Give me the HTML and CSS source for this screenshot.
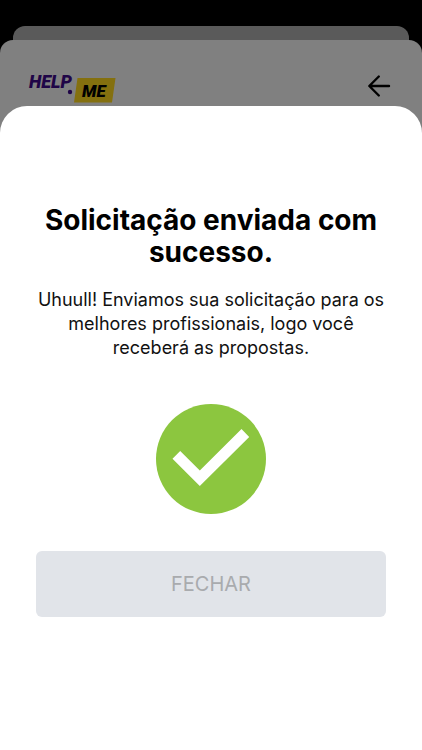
FILE: index.html
```html
<!DOCTYPE html>
<html lang="pt-BR">
<head>
    <meta charset="UTF-8">
    <meta name="viewport" content="width=device-width, initial-scale=1.0">
    <title>Help.Me</title>
    <link rel="stylesheet" href="styles.css">
</head>
<body>

    <div class="card-behind"></div>

    <div class="card">
        <header class="header">
            <svg class="logo" viewBox="0 0 88 34" role="img" aria-label="Help.Me">
                <text class="logo-help" x="1" y="18">HELP</text>
                <circle class="logo-dot" cx="42" cy="22" r="2.2" />
                <polygon class="logo-tag" points="49.5,8 87.5,8 84,32.5 46,32.5" />
                <text class="logo-me" x="54" y="27">ME</text>
            </svg>
            <button class="back" type="button" aria-label="Voltar">
                <svg viewBox="0 0 24 24">
                    <path d="M22 12H2.500M11.800 2.500L2.300 12L11.800 21.500" />
                </svg>
            </button>
        </header>

        <main class="sheet">
            <h1>Solicitação enviada com sucesso.</h1>
            <p>Uhuull! Enviamos sua solicitação para os melhores profissionais, logo você receberá as propostas.</p>
            <svg class="check" viewBox="0 0 110 110">
                <circle cx="55" cy="55" r="55" />
                <polygon points="16.500,54.700 24.200,47 43.800,66.500 85.500,25 93.200,33 43.800,82" />
            </svg>
            <button class="close" type="button">FECHAR</button>
        </main>
    </div>

</body>
</html>
```
FILE: styles.css
```css
* {
    box-sizing: border-box;
}

body {
    font-family: Inter, "Liberation Sans", sans-serif;
    background-color: #000;
    color: #000;
    margin: 0;
    padding-top: 26px;
    min-height: 100vh;
    display: flex;
    flex-direction: column;
}

.card-behind {
    height: 14px;
    margin: 0 13px;
    background-color: #5a5a5a;
    border-radius: 12px 12px 0 0;
}

.card {
    flex: 1;
    display: flex;
    flex-direction: column;
    background-color: #808080;
    border-radius: 13px 13px 0 0;
}

.header {
    display: flex;
    justify-content: space-between;
    align-items: flex-start;
    padding: 30px 31px 2px 28px;
}

.logo {
    width: 88px;
    height: 34px;
}

.logo text {
    font-family: Roboto, "Liberation Sans", sans-serif;
    font-weight: 900;
    font-style: italic;
}

.logo-help {
    font-size: 18px;
}

.logo-me {
    font-size: 17px;
}

.logo-help,
.logo-dot {
    fill: #1f0547;
}

.logo-tag {
    fill: #84700f;
}

.back {
    width: 24px;
    height: 24px;
    margin-top: 4px;
    padding: 0;
    background: none;
    border: none;
    cursor: pointer;
}

.back svg {
    display: block;
    fill: none;
    stroke: #000;
    stroke-width: 2.4;
    stroke-linecap: round;
    stroke-linejoin: round;
}

.sheet {
    flex: 1;
    display: flex;
    flex-direction: column;
    align-items: center;
    padding: 98px 36px 40px;
    background-color: #fff;
    border-radius: 27px 27px 0 0;
    text-align: center;
}

h1 {
    margin: 0;
    font-size: 28px;
    line-height: 32px;
    font-weight: bold;
}

p {
    margin: 20px 0 44px;
    font-size: 18px;
    line-height: 24px;
    color: #111;
}

.check {
    width: 110px;
    height: 110px;
    fill: #8cc63f;
}

.check polygon {
    fill: #fff;
}

.close {
    width: 100%;
    margin-top: 37px;
    padding: 21px;
    font-family: inherit;
    font-size: 20px;
    line-height: 24px;
    color: #a9abae;
    background-color: #e1e4e9;
    border: none;
    border-radius: 6px;
    cursor: pointer;
}
```
